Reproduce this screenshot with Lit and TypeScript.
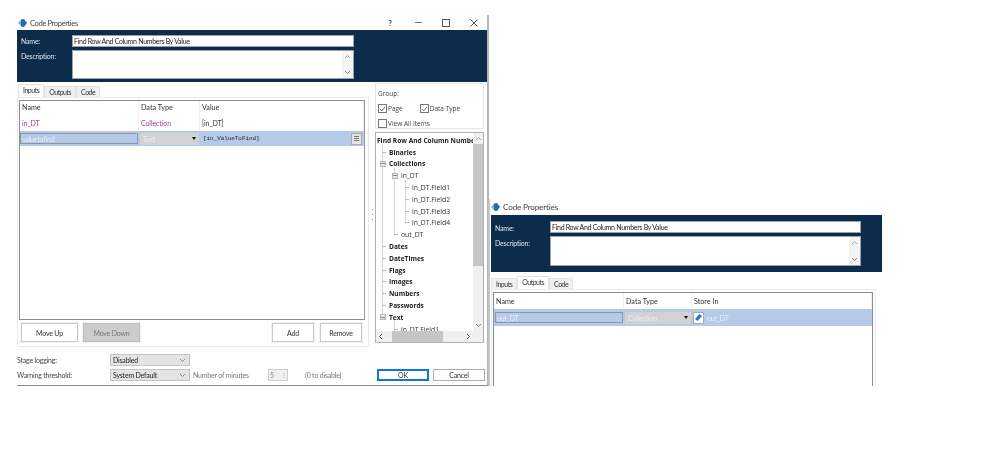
import { LitElement, html, css, svg } from "lit";
import { customElement } from "lit/decorators.js";

const logo = svg`<svg class="logo" width="9" height="8" viewBox="0 0 9 8"><path d="M0 4 3 1v6z" fill="#6fb4dc"/><path d="M3 0.5 6 0l3 4-3 4-3-.5z" fill="#1f6fa8"/></svg>`;
const chevUp = svg`<svg width="7" height="5" viewBox="0 0 7 5"><path d="M1 4 3.5 1.5 6 4" fill="none" stroke="#aaa" stroke-width="1"/></svg>`;
const chevDown = svg`<svg width="7" height="5" viewBox="0 0 7 5"><path d="M1 1 3.5 3.5 6 1" fill="none" stroke="#888" stroke-width="1"/></svg>`;
const check = svg`<svg width="8" height="8" viewBox="0 0 8 8"><path d="M1 4 3.2 6.2 7 1.5" fill="none" stroke="#555" stroke-width="1"/></svg>`;

@customElement("app-root")
export class AppRoot extends LitElement {
  static styles = css`
    :host { display: block; position: relative; width: 999px; height: 462px; background: #fff; overflow: hidden;
      font-family: Lato, "Liberation Sans", sans-serif; font-size: 7px; letter-spacing: -0.2px; color: #333; }
    * { box-sizing: border-box; }
    .win { position: absolute; display: flex; flex-direction: column; background: #fff; filter: blur(0.3px); }
    .w1 { left: 17px; top: 15px; width: 472px; height: 371px; border-right: 2px solid #b5b5b5; border-bottom: 1px solid #8a8a8a; }
    .w2 { left: 488px; top: 199px; width: 395px; height: 187px; border-left: 2px solid #c4c4c4; }
    .title { height: 15px; display: flex; align-items: center; gap: 3px; flex: none; }
    .w1 .title { padding-left: 1px; }
    .w2 .title { height: 16px; padding: 0 0 0 1px; align-items: center; }
    .title .txt { font-size: 7.6px; letter-spacing: -0.4px; color: #444; }
    .w2 .title .txt { font-size: 8.2px; letter-spacing: -0.2px; }
    .caption { margin-left: auto; display: flex; align-items: center; gap: 20px; padding-right: 9px; color: #444; }
    .cap { width: 8px; height: 8px; display: flex; align-items: center; justify-content: center; }
    .q { font-weight: 700; font-size: 8px; }
    .minbar { width: 7px; height: 1px; background: #777; }
    .navy { background: #0d2b4b; flex: none; display: grid; row-gap: 3px; }
    .w1 .navy { height: 52px; padding: 5px 0 0 4px; grid-template-columns: 51px 282px; grid-template-rows: 12px 29px; }
    .w2 .navy { height: 57px; margin-left: 1px; width: 391px; padding: 6px 0 0 4px; grid-template-columns: 55px 311px; grid-template-rows: 12px 30px; }
    .navy label { color: #dfe6ee; padding-top: 2px; }
    .w2 .navy label { padding-top: 3px; }
    .field { background: #fff; border: 1px solid #9aa3ad; display: flex; align-items: center; padding-left: 1px; color: #222; white-space: nowrap; letter-spacing: -0.3px; }
    .area { background: #fff; border: 1px solid #9aa3ad; display: flex; justify-content: flex-end; }
    .sb { width: 11px; background: #f4f4f4; display: flex; flex-direction: column; justify-content: space-between; align-items: center; padding: 3px 0; }
    .body { display: flex; flex: none; }
    .left { width: 352px; margin-top: 2px; }
    .tabs { display: flex; height: 13px; align-items: flex-end; padding-left: 1px; }
    .tab { padding: 0 4px; height: 11px; background: #f0f0f0; border: 1px solid #e3e3e3; border-bottom: none; color: #333; line-height: 10px; letter-spacing: -0.5px; }
    .tab.on { background: #fff; height: 13px; line-height: 11px; }
    .panel { border: 1px solid #e4ebf4; height: 250px; padding: 2px 3px 0 1px; display: flex; flex-direction: column; }
    .tbl { height: 220px; border: 1px solid #8c8c8c; border-right-color: #999; background: #fff; flex: none; display: flex; flex-direction: column; }
    .row { display: grid; grid-template-columns: 119px 61px 1fr; align-items: center; flex: none; }
    .hd { height: 13px; color: #333; letter-spacing: 0; font-size: 7.2px; }
    .hd div, .r1 div { padding-left: 2px; height: 100%; display: flex; align-items: center; border-right: 1px solid #eee; }
    .r1 { height: 17px; color: #a339a8; letter-spacing: -0.1px; }
    .r1 .v { color: #333; }
    .r2 { height: 15px; background: #b5c9e8; }
    .nm { height: 11px; margin-right: 1px; border: 1px solid #8e96a3; background: #b5c9e8; color: #e8eef8; display: flex; align-items: center; padding-left: 1px; }
    .dd { height: 12px; margin: 0 1px; background: #d2d2d2; color: #eee; display: flex; align-items: center; justify-content: space-between; padding: 0 3px; }
    .tri { width: 0; height: 0; border-left: 2.5px solid transparent; border-right: 2.5px solid transparent; border-top: 3px solid #111; }
    .val { display: flex; align-items: center; justify-content: space-between; padding: 0 2px 0 3px; font-family: "Liberation Mono", monospace; font-size: 5.9px; letter-spacing: 0; color: #222; }
    .calc { width: 11px; height: 12px; background: #e4e4e4; border: 1px solid #aaa; display: flex; flex-direction: column; align-items: center; justify-content: center; gap: 1px; }
    .calc i { display: block; width: 5px; height: 1px; background: #777; }
    .btns { display: flex; margin-top: 3px; padding-left: 2px; gap: 5px; }
    .btn { height: 19px; border: 1px solid #c9c9c9; background: #fff; color: #333; display: flex; align-items: center; justify-content: center; outline: 1px solid #f2f2f2; }
    .mv { width: 57px; }
    .off { background: #ccc; color: #777; border-color: #bdbdbd; }
    .grow { flex: 1; }
    .add { width: 42px; margin-right: 1px; }
    .rm { width: 42px; margin-right: 3px; }
    .split { width: 6px; display: flex; flex-direction: column; align-items: center; justify-content: center; gap: 4px; }
    .split i { width: 1px; height: 1px; background: #999; display: block; }
    .right { width: 109px; padding-top: 1px; font-family: "Open Sans", sans-serif; letter-spacing: 0; }
    .grp { height: 46px; border: 1px solid #dfe6ee; padding: 5px 2px 0; color: #444; font-size: 6.5px; line-height: 9px; }
    .cks { display: flex; gap: 17px; margin-top: 6px; }
    .ck { display: flex; align-items: center; gap: 1px; white-space: nowrap; }
    .box { width: 9px; height: 9px; border: 1px solid #777; display: flex; align-items: center; justify-content: center; background: #fff; flex: none; }
    .ck.va { margin-top: 6px; }
    .tree { height: 211px; margin-top: 3px; border: 1px solid #b0b0b0; display: grid; grid-template-columns: 1fr 10px; grid-template-rows: 1fr 11px; overflow: hidden; }
    .items { overflow: hidden; padding-top: 1.5px;
      background-image: linear-gradient(#d4d4d4, #d4d4d4), linear-gradient(#d4d4d4, #d4d4d4), linear-gradient(#d4d4d4, #d4d4d4), linear-gradient(#d4d4d4, #d4d4d4);
      background-repeat: no-repeat;
      background-size: 1px 176px, 1px 68px, 1px 43px, 1px 20px;
      background-position: 6px 11px, 18px 35px, 29px 47px, 18px 187px; }
    .ti { height: 11.8px; display: flex; align-items: center; white-space: nowrap; font-size: 6.8px; color: #333; }
    .ti b { font-weight: 700; color: #222; font-size: 6.6px; }
    .ti u { display: block; flex: none; height: 1px; width: 4px; background: #bbb; margin-right: 3px; }
    .ti s { flex: none; width: 6px; height: 6px; border: 1px solid #b5b5b5; background: linear-gradient(#888, #888) center / 4px 1px no-repeat, #e6e6e6; margin: 0 3px 0 -2px; }
    .vs { background: #f0f0f0; display: flex; flex-direction: column; align-items: center; }
    .vs .th { width: 100%; flex: none; height: 122px; background: #c6c6c6; }
    .ar { height: 11px; flex: none; display: flex; align-items: center; justify-content: center; }
    .hs { background: #f0f0f0; display: flex; align-items: center; justify-content: space-between; padding: 0 2px; }
    .hs .th { height: 100%; width: 51px; background: #c6c6c6; margin-left: 9px; margin-right: auto; }
    .corner { background: #f0f0f0; }
    .foot { flex: 1; position: relative; display: flex; }
    .fl { width: 358px; padding-top: 7px; }
    .frow { display: flex; align-items: center; height: 12px; margin-bottom: 3px; white-space: nowrap; }
    .frow .lb { width: 93px; color: #444; }
    .sel { height: 12px; width: 80px; background: #e4e4e4; border: 1px solid #c4c4c4; color: #222; display: flex; align-items: center; justify-content: space-between; padding: 0 3px 0 2px; }
    .mut { color: #777; }
    .mins { margin-left: 3px; width: 75px; }
    .dis { margin-left: 17px; }
    .spin { width: 20px; height: 12px; background: #f0f0f0; border: 1px solid #ccc; color: #888; padding: 0 2px 0 1px; line-height: 10px; display: flex; justify-content: space-between; }
    .okc { display: flex; gap: 4px; align-items: flex-end; padding: 0 0 4px 2px; }
    .ok { width: 52px; height: 12px; border: 1px solid #0a78d4; outline: 1px solid #0a78d4; outline-offset: -2px; display: flex; align-items: center; justify-content: center; color: #333; }
    .cn { width: 52px; height: 12px; border: 1px solid #adadad; display: flex; align-items: center; justify-content: center; color: #333; }
    .w2 .tabs { height: 16px; padding-left: 1px; margin-top: 3px; }
    .w2 .panel { width: 385px; height: 98px; margin-left: 1px; border-bottom: none; padding: 2px 2px 0 1px; }
    .w2 .tbl { height: 94px; border-bottom: none; border-right: 1px solid #8c8c8c; }
    .w2 .row { grid-template-columns: 130px 68px 1fr; }
    .w2 .r2 { height: 17px; }
    .w2 .hd { height: 16px; }
    .w2 .nm { margin-left: 1px; }
    .store { display: flex; align-items: center; gap: 3px; color: #e8eef8; padding-left: 1px; }
    .eraser { width: 11px; height: 12px; background: #fff; border: 1px solid #aaa; display: flex; align-items: center; justify-content: center; }
  `;

  private tree() {
    const items: [number, string, boolean, boolean][] = [
      [0, "Find Row And Column Numbers By Value", true, false],
      [1, "Binaries", true, false],
      [1, "Collections", true, true],
      [2, "in_DT", false, true],
      [3, "in_DT.Field1", false, false],
      [3, "in_DT.Field2", false, false],
      [3, "in_DT.Field3", false, false],
      [3, "in_DT.Field4", false, false],
      [2, "out_DT", false, false],
      [1, "Dates", true, false],
      [1, "DateTimes", true, false],
      [1, "Flags", true, false],
      [1, "Images", true, false],
      [1, "Numbers", true, false],
      [1, "Passwords", true, false],
      [1, "Text", true, true],
      [2, "in_DT.Field1", false, false],
    ];
    return items.map(([lv, t, b, exp]) => {
      const pad = lv === 0 ? 1 : lv === 1 ? 6 : lv === 2 ? 18 : 29;
      return html`<div class="ti" style="padding-left:${pad}px">${lv > 0 ? (exp ? html`<s></s>` : html`<u></u>`) : ""}${b ? html`<b>${t}</b>` : t}</div>`;
    });
  }

  render() {
    return html`
      <div class="win w1">
        <div class="title">${logo}<span class="txt">Code Properties</span>
          <div class="caption"><span class="cap q">?</span><span class="cap"><span class="minbar"></span></span>
            <svg width="8" height="8" viewBox="0 0 8 8"><rect x=".5" y=".5" width="7" height="7" fill="none" stroke="#555"/></svg>
            <svg width="8" height="8" viewBox="0 0 8 8"><path d="M.5.5l7 7M7.5.5l-7 7" stroke="#555"/></svg></div></div>
        <div class="navy"><label>Name:</label><div class="field">Find Row And Column Numbers By Value</div>
          <label>Description:</label><div class="area"><div class="sb">${chevUp}${chevDown}</div></div></div>
        <div class="body">
          <div class="left">
            <div class="tabs"><div class="tab on">Inputs</div><div class="tab">Outputs</div><div class="tab">Code</div></div>
            <div class="panel">
              <div class="tbl">
                <div class="row hd"><div>Name</div><div>Data Type</div><div>Value</div></div>
                <div class="row r1"><div>in_DT</div><div>Collection</div><div class="v">[in_DT]</div></div>
                <div class="row r2"><div class="nm">valuetofind</div><div class="dd">Text<span class="tri"></span></div>
                  <div class="val">[in_ValueToFind]<span class="calc"><i></i><i></i><i></i></span></div></div>
              </div>
              <div class="btns"><div class="btn mv">Move Up</div><div class="btn mv off">Move Down</div><div class="grow"></div><div class="btn add">Add</div><div class="btn rm">Remove</div></div>
            </div>
          </div>
          <div class="split"><i></i><i></i><i></i></div>
          <div class="right">
            <div class="grp">Group:
              <div class="cks"><span class="ck"><span class="box">${check}</span>Page</span><span class="ck"><span class="box">${check}</span>Data Type</span></div>
              <div class="ck va"><span class="box"></span>View All Items</div>
            </div>
            <div class="tree">
              <div class="items">${this.tree()}</div>
              <div class="vs"><div class="ar">${chevUp}</div><div class="th"></div><div class="grow"></div><div class="ar">${chevDown}</div></div>
              <div class="hs"><svg width="5" height="7" viewBox="0 0 5 7"><path d="M4 1 1.5 3.5 4 6" fill="none" stroke="#555"/></svg><div class="th"></div><svg width="5" height="7" viewBox="0 0 5 7"><path d="M1 1 3.5 3.5 1 6" fill="none" stroke="#555"/></svg></div>
              <div class="corner"></div>
            </div>
          </div>
        </div>
        <div class="foot">
          <div class="fl">
            <div class="frow"><span class="lb">Stage logging:</span><span class="sel">Disabled ${chevDown}</span></div>
            <div class="frow"><span class="lb">Warning threshold:</span><span class="sel">System Default ${chevDown}</span><span class="mut mins">Number of minutes</span><span class="spin">5<span>⁝</span></span><span class="mut dis">(0 to disable)</span></div>
          </div>
          <div class="okc"><div class="ok">OK</div><div class="cn">Cancel</div></div>
        </div>
      </div>

      <div class="win w2">
        <div class="title">${logo}<span class="txt">Code Properties</span></div>
        <div class="navy"><label>Name:</label><div class="field">Find Row And Column Numbers By Value</div>
          <label>Description:</label><div class="area"><div class="sb">${chevUp}${chevDown}</div></div></div>
        <div class="tabs"><div class="tab">Inputs</div><div class="tab on">Outputs</div><div class="tab">Code</div></div>
        <div class="panel">
          <div class="tbl">
            <div class="row hd"><div>Name</div><div>Data Type</div><div>Store In</div></div>
            <div class="row r2"><div class="nm">out_DT</div><div class="dd">Collection<span class="tri"></span></div>
              <div class="store"><span class="eraser"><svg width="9" height="9" viewBox="0 0 9 9"><path d="M1 6 5.5 1 8 3 3.5 8z" fill="#2a72c8"/></svg></span>out_DT</div></div>
          </div>
        </div>
      </div>
    `;
  }
}
